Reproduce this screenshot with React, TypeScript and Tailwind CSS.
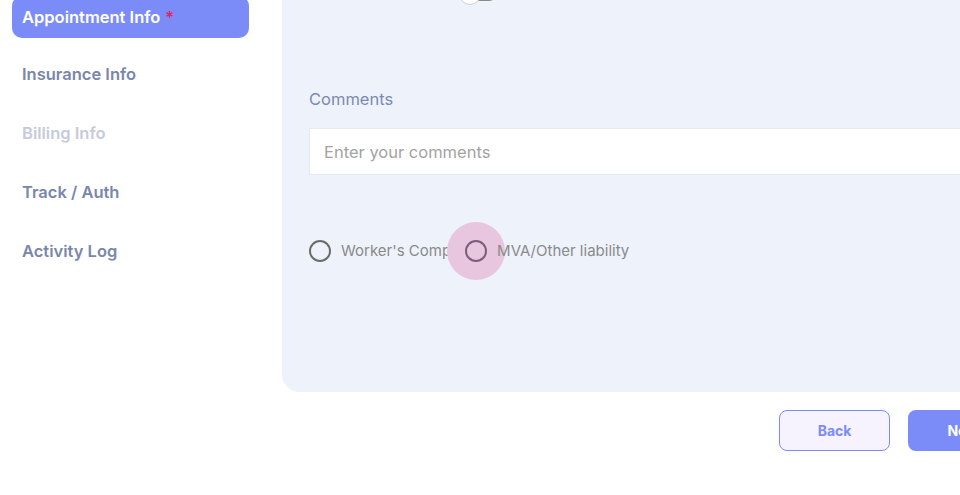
import { useState } from 'react'

const navItems = [
  { label: 'Insurance Info', disabled: false },
  { label: 'Billing Info', disabled: true },
  { label: 'Track / Auth', disabled: false },
  { label: 'Activity Log', disabled: false },
]

function Radio({ label, ripple }: { label: string; ripple?: boolean }) {
  return (
    <label className="flex items-center gap-[10px] cursor-pointer">
      <span className="relative flex h-[22px] w-[22px] items-center justify-center">
        {ripple && (
          <span className="absolute left-1/2 top-1/2 h-[58px] w-[58px] -translate-x-1/2 -translate-y-1/2 rounded-full bg-[#e9c6df]" />
        )}
        <span
          className={`relative h-[22px] w-[22px] rounded-full border-2 ${
            ripple ? 'border-[#7a5d77]' : 'border-[#6b6b6b]'
          }`}
        />
      </span>
      <span className="relative text-[15px] text-[#8a8a8a]">{label}</span>
    </label>
  )
}

export default function App() {
  const [comments, setComments] = useState('')

  return (
    <div
      className="h-[495px] w-[960px] overflow-hidden bg-white"
      style={{ fontFamily: 'Inter, "Noto Sans", sans-serif' }}
    >
      <div className="-mt-[40px] flex">
        {/* Sidebar */}
        <div className="w-[282px] shrink-0 pl-[12px] pt-[36px]">
          <div className="flex h-[42px] w-[237px] items-center rounded-[10px] bg-[#7b8cf8] pl-[10px] text-[16.5px] font-semibold text-white">
            Appointment Info <span className="ml-[5px] text-[#e0245e]">*</span>
          </div>
          <div className="mt-[12px] flex flex-col gap-[9px]">
            {navItems.map((item) => (
              <div
                key={item.label}
                className={`flex h-[49.7px] items-center pl-[10px] text-[16.5px] font-semibold ${
                  item.disabled ? 'text-[#c6cbdc]' : 'text-[#7a86ab]'
                }`}
              >
                {item.label}
              </div>
            ))}
          </div>
        </div>

        {/* Main */}
        <div className="w-[760px] shrink-0">
          <div className="rounded-bl-[18px] bg-[#eef3fb] pb-[129px] pl-[27px] pt-[22px]">
            {/* toggle, mostly scrolled out */}
            <div className="ml-[151px] flex h-[24px] items-center">
              <div className="relative h-[14px] w-[36px] rounded-full bg-[#8a8a8a]">
                <div className="absolute -left-[1px] -top-[4px] h-[22px] w-[22px] rounded-full border border-[#cfcfcf] bg-white" />
              </div>
            </div>

            <div className="mt-[82px] text-[16.5px] leading-[23px] text-[#7d89b0]">Comments</div>
            <input
              value={comments}
              onChange={(e) => setComments(e.target.value)}
              placeholder="Enter your comments"
              className="mt-[17px] block h-[47px] w-full border border-[#e6eaf0] bg-white px-[14px] text-[16.5px] text-[#444] outline-none placeholder:text-[#a3a3a3]"
            />

            <div className="mt-[65px] flex items-center gap-[14px]">
              <Radio label="Worker's Comp" />
              <Radio label="MVA/Other liability" ripple />
            </div>
          </div>

          <div className="mt-[18px] flex gap-[18px] pl-[497px]">
            <button className="h-[41px] w-[111px] rounded-[8px] border border-[#7b8cf8] bg-[#f6f3fe] text-[14px] font-bold text-[#7b8cf8]">
              Back
            </button>
            <button className="h-[41px] w-[111px] rounded-[8px] bg-[#7b8cf8] text-[14px] font-bold text-white">
              Next
            </button>
          </div>
        </div>
      </div>
    </div>
  )
}
